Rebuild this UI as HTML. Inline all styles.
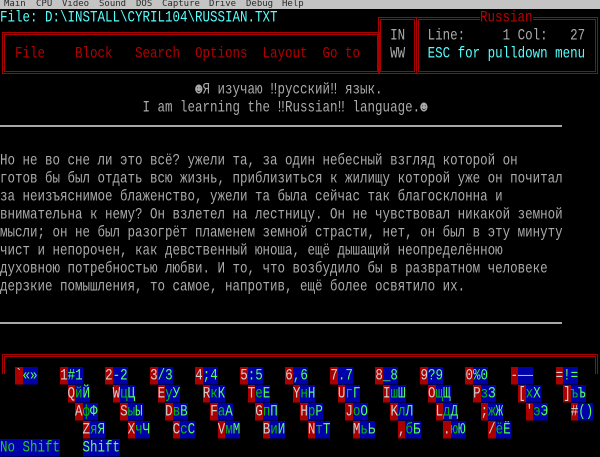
<!DOCTYPE html>
<html><head><meta charset="utf-8">
<style>
html,body{margin:0;padding:0;background:#000;width:600px;height:457px;overflow:hidden;position:relative}
.mb{position:absolute;left:0;top:0;width:600px;height:9px;background:#c4c4c4}
.mb span{position:absolute;top:-1px;font:9px/10px "DejaVu Sans Mono","Liberation Mono",monospace;color:#2a2a2a}
.r{position:absolute;left:0;width:600px;height:14.336px;white-space:pre;font-family:"Liberation Mono","DejaVu Sans Mono",monospace;font-size:12.5px;line-height:14.336px;color:#aaa;transform:scaleY(1.25);transform-origin:0 0;letter-spacing:0}
.c{color:#55ffff}.red{color:#b00000}
.k{display:inline-block;height:14.336px;vertical-align:top}
.R{background:#aa0000;color:#d0d0d0}
.B{background:#0000aa;color:#55ff55}
.g{color:#00c000}
.box{position:absolute;border:3px double #aa0000;box-sizing:border-box}
.hl{position:absolute;left:0;width:562px;height:2px;background:#a8a8a8}
</style></head><body>
<div class="mb"><span style="left:4px">Main</span><span style="left:36px">CPU</span><span style="left:62px">Video</span><span style="left:99px">Sound</span><span style="left:136px">DOS</span><span style="left:162px">Capture</span><span style="left:209px">Drive</span><span style="left:246px">Debug</span><span style="left:282px">Help</span></div>

<div class="box" style="left:2px;top:32px;width:378px;height:42px"></div>
<div class="box" style="left:378px;top:17px;width:39px;height:57px"></div>
<div class="box" style="left:416px;top:17px;width:182px;height:57px"></div>
<div class="box" style="left:2px;top:354px;width:596px;height:20px;border-bottom:none"></div>

<div class="r c" style="top:9px">File: D:\INSTALL\CYRIL104\RUSSIAN.TXT</div>
<div class="r" style="top:9px;left:480px;width:auto;background:#000;color:#c00000">Russian</div>
<div class="r" style="top:26.9px">                                                    IN   Line:     1 Col:   27</div>
<div class="r" style="top:44.8px"><span class="red">  File    Block   Search  Options  Layout  Go to</span>    WW   <span class="c">ESC for pulldown menu</span></div>

<div class="r" style="top:80.7px">                          ☻Я изучаю ‼русский‼ язык.</div>
<div class="r" style="top:98.6px">                   I am learning the ‼Russian‼ language.☻</div>
<div class="hl" style="top:125px"></div>

<div class="r" style="top:152.4px">Но не во сне ли это всё? ужели та, за один небесный взгляд которой он</div>
<div class="r" style="top:170.3px">готов бы был отдать всю жизнь, приблизиться к жилищу которой уже он почитал</div>
<div class="r" style="top:188.2px">за неизъяснимое блаженство, ужели та была сейчас так благосклонна и</div>
<div class="r" style="top:206.1px">внимательна к нему? Он взлетел на лестницу. Он не чувствовал никакой земной</div>
<div class="r" style="top:224.0px">мысли; он не был разогрёт пламенем земной страсти, нет, он был в эту минуту</div>
<div class="r" style="top:242.0px">чист и непорочен, как девственный юноша, ещё дышащий неопределённою</div>
<div class="r" style="top:259.9px">духовною потребностью любви. И то, что возбудило бы в развратном человеке</div>
<div class="r" style="top:277.8px">дерзкие помышления, то самое, напротив, ещё более освятило их.</div>
<div class="hl" style="top:322px"></div>

<div class="r" style="top:367.4px">  <span class="k R">`</span><span class="k B c">«»</span>   <span class="k R">1</span><span class="k B">#1</span>   <span class="k R">2</span><span class="k B">-2</span>   <span class="k R">3</span><span class="k B">/3</span>   <span class="k R">4</span><span class="k B">;4</span>   <span class="k R">5</span><span class="k B">:5</span>   <span class="k R">6</span><span class="k B">,6</span>   <span class="k R">7</span><span class="k B">.7</span>   <span class="k R">8</span><span class="k B">_8</span>   <span class="k R">9</span><span class="k B">?9</span>   <span class="k R">0</span><span class="k B">%0</span>   <span class="k R">-</span><span class="k B">——</span>   <span class="k R">=</span><span class="k B">!=</span></div>
<div class="r" style="top:385.3px">         <span class="k R">Q</span><span class="k B"><span class="g">й</span>Й</span>   <span class="k R">W</span><span class="k B"><span class="g">ц</span>Ц</span>   <span class="k R">E</span><span class="k B"><span class="g">у</span>У</span>   <span class="k R">R</span><span class="k B"><span class="g">к</span>К</span>   <span class="k R">T</span><span class="k B"><span class="g">е</span>Е</span>   <span class="k R">Y</span><span class="k B"><span class="g">н</span>Н</span>   <span class="k R">U</span><span class="k B"><span class="g">г</span>Г</span>   <span class="k R">I</span><span class="k B"><span class="g">ш</span>Ш</span>   <span class="k R">O</span><span class="k B"><span class="g">щ</span>Щ</span>   <span class="k R">P</span><span class="k B"><span class="g">з</span>З</span>   <span class="k R">[</span><span class="k B"><span class="g">х</span>Х</span>   <span class="k R">]</span><span class="k B"><span class="g">ъ</span>Ъ</span></div>
<div class="r" style="top:403.2px">          <span class="k R">A</span><span class="k B"><span class="g">ф</span>Ф</span>   <span class="k R">S</span><span class="k B"><span class="g">ы</span>Ы</span>   <span class="k R">D</span><span class="k B"><span class="g">в</span>В</span>   <span class="k R">F</span><span class="k B"><span class="g">а</span>А</span>   <span class="k R">G</span><span class="k B"><span class="g">п</span>П</span>   <span class="k R">H</span><span class="k B"><span class="g">р</span>Р</span>   <span class="k R">J</span><span class="k B"><span class="g">о</span>О</span>   <span class="k R">K</span><span class="k B"><span class="g">л</span>Л</span>   <span class="k R">L</span><span class="k B"><span class="g">д</span>Д</span>   <span class="k R">;</span><span class="k B"><span class="g">ж</span>Ж</span>   <span class="k R">'</span><span class="k B"><span class="g">э</span>Э</span>   <span class="k R">#</span><span class="k B">()</span></div>
<div class="r" style="top:421.1px">           <span class="k R">Z</span><span class="k B"><span class="g">я</span>Я</span>   <span class="k R">X</span><span class="k B"><span class="g">ч</span>Ч</span>   <span class="k R">C</span><span class="k B"><span class="g">с</span>С</span>   <span class="k R">V</span><span class="k B"><span class="g">м</span>М</span>   <span class="k R">B</span><span class="k B"><span class="g">и</span>И</span>   <span class="k R">N</span><span class="k B"><span class="g">т</span>Т</span>   <span class="k R">M</span><span class="k B"><span class="g">ь</span>Ь</span>   <span class="k R">,</span><span class="k B"><span class="g">б</span>Б</span>   <span class="k R">.</span><span class="k B"><span class="g">ю</span>Ю</span>   <span class="k R">/</span><span class="k B"><span class="g">ё</span>Ё</span></div>
<div class="r" style="top:439.0px"><span class="k B" style="color:#22cc22">No Shift</span>   <span class="k B" style="color:#66ff66">Shift</span></div>
</body></html>
